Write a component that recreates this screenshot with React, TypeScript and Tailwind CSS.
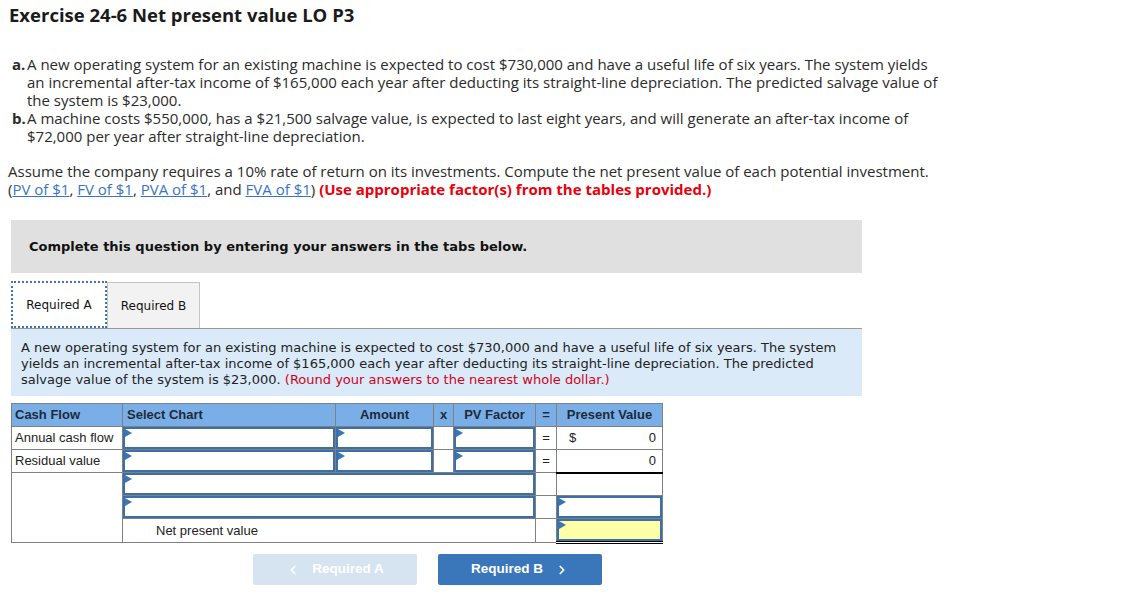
import React from "react";
import { ChevronLeft, ChevronRight } from "lucide-react";

const proxima = { fontFamily: "'Open Sans', Lato, sans-serif" };

function Flag() {
  return (
    <span className="absolute left-0 top-0 w-0 h-0 border-t-[4px] border-b-[4px] border-l-[7px] border-t-transparent border-b-transparent border-l-[#3a75b9]" />
  );
}

function InputCell({ yellow = false }: { yellow?: boolean }) {
  return (
    <div
      className={`relative h-[22px] border-2 border-[#3b6fa8] ${
        yellow ? "bg-[#ffffa8]" : "bg-white"
      }`}
    >
      <Flag />
    </div>
  );
}

export default function App() {
  const td = "border border-[#808080] p-0 align-middle";
  return (
    <div className="bg-white min-h-screen text-[#222]" style={proxima}>
      <div className="pl-[9px] pt-[4px]">
        <h1 className="text-[18.5px] font-bold text-[#1a1a1a] leading-[22px]">
          Exercise 24-6 Net present value LO P3
        </h1>
      </div>

      <div className="pl-[12px] pt-[29px] w-[1000px] text-[15px] leading-[18px] text-[#2b2b2b] whitespace-nowrap">
        <div className="flex">
          <span className="font-bold w-[15px] shrink-0">a.</span>
          <p>
            A new operating system for an existing machine is expected to cost
            $730,000 and have a useful life of six years. The system yields
            <br />
            an incremental after-tax income of $165,000 each year after
            deducting its straight-line depreciation. The predicted salvage
            value of
            <br />
            the system is $23,000.
          </p>
        </div>
        <div className="flex">
          <span className="font-bold w-[15px] shrink-0">b.</span>
          <p>
            A machine costs $550,000, has a $21,500 salvage value, is expected to
            last eight years, and will generate an after-tax income of
            <br />
            $72,000 per year after straight-line depreciation.
          </p>
        </div>
      </div>

      <p className="pl-[8px] pt-[17px] w-[1000px] text-[15px] leading-[18px] text-[#2b2b2b] whitespace-nowrap">
        Assume the company requires a 10% rate of return on its investments.
        Compute the net present value of each potential investment.
        <br />
        (<a className="text-[#3a74c4] underline">PV of $1</a>,{" "}
        <a className="text-[#3a74c4] underline">FV of $1</a>,{" "}
        <a className="text-[#3a74c4] underline">PVA of $1</a>, and{" "}
        <a className="text-[#3a74c4] underline">FVA of $1</a>){" "}
        <span className="font-bold text-[#e8000b]">
          (Use appropriate factor(s) from the tables provided.)
        </span>
      </p>

      <div
        className="ml-[11px] mt-[22px] w-[851px]"
        style={{ fontFamily: "'DejaVu Sans', Verdana, sans-serif" }}
      >
        <div className="h-[53px] bg-[#e0e0e0] flex items-center pl-[18px] text-[13px] font-bold text-[#111]">
          Complete this question by entering your answers in the tabs below.
        </div>

        <div className="mt-[8px] flex items-end border-b border-[#999]">
          <div className="h-[47px] w-[96px] border-2 border-dotted border-[#3a75b9] bg-white flex items-center justify-center text-[12px] text-[#111]">
            Required A
          </div>
          <div className="h-[46px] w-[93px] border border-b-0 border-[#c4c4c4] bg-[#f2f2f2] flex items-center justify-center text-[12px] text-[#111]">
            Required B
          </div>
        </div>

        <div className="bg-[#daeaf8] h-[67px] px-[10px] pt-[11px] text-[13px] leading-[16px] text-[#222]">
          A new operating system for an existing machine is expected to cost
          $730,000 and have a useful life of six years. The system yields an
          incremental after-tax income of $165,000 each year after deducting its
          straight-line depreciation. The predicted salvage value of the system
          is $23,000.{" "}
          <span className="text-[#d0021b]">
            (Round your answers to the nearest whole dollar.)
          </span>
        </div>
      </div>

      <table
        className="ml-[11px] mt-[7px] border-collapse table-fixed text-[13px] text-[#222]"
        style={{ fontFamily: "'Liberation Sans', Arial, sans-serif", width: 651 }}
      >
        <colgroup>
          <col style={{ width: 111 }} />
          <col style={{ width: 213 }} />
          <col style={{ width: 98 }} />
          <col style={{ width: 20 }} />
          <col style={{ width: 82 }} />
          <col style={{ width: 21 }} />
          <col style={{ width: 106 }} />
        </colgroup>
        <thead>
          <tr className="h-[23px] bg-[#7aaee6] text-[#1e2a3a]">
            <th className={`${td} text-left pl-[3px] font-bold`}>Cash Flow</th>
            <th className={`${td} text-left pl-[4px] font-bold`}>Select Chart</th>
            <th className={`${td} text-center font-bold`}>Amount</th>
            <th className={`${td} text-center font-bold`}>x</th>
            <th className={`${td} text-center font-bold`}>PV Factor</th>
            <th className={`${td} text-center font-bold`}>=</th>
            <th className={`${td} text-center font-bold`}>Present Value</th>
          </tr>
        </thead>
        <tbody>
          <tr className="h-[23px]">
            <td className={`${td} pl-[3px]`}>Annual cash flow</td>
            <td className={td}><InputCell /></td>
            <td className={td}><InputCell /></td>
            <td className={td}></td>
            <td className={td}><InputCell /></td>
            <td className={`${td} text-center`}>=</td>
            <td className={`${td} px-[6px]`}>
              <div className="flex justify-between pl-[6px]">
                <span>$</span>
                <span>0</span>
              </div>
            </td>
          </tr>
          <tr className="h-[23px]">
            <td className={`${td} pl-[3px]`}>Residual value</td>
            <td className={td}><InputCell /></td>
            <td className={td}><InputCell /></td>
            <td className={td}></td>
            <td className={td}><InputCell /></td>
            <td className={`${td} text-center`}>=</td>
            <td className={`${td} px-[6px] text-right border-b-2 border-b-black`}>0</td>
          </tr>
          <tr className="h-[23px]">
            <td className={td} rowSpan={3}></td>
            <td className={td} colSpan={4}><InputCell /></td>
            <td className={td}></td>
            <td className={td}></td>
          </tr>
          <tr className="h-[23px]">
            <td className={td} colSpan={4}><InputCell /></td>
            <td className={td}></td>
            <td className={td}><InputCell /></td>
          </tr>
          <tr className="h-[23px]">
            <td className={`${td} pl-[33px]`} colSpan={4}>Net present value</td>
            <td className={td}></td>
            <td className={`${td} border-b-[3px] border-b-black border-double`}>
              <InputCell yellow />
            </td>
          </tr>
        </tbody>
      </table>

      <div
        className="ml-[253px] mt-[10px] flex gap-[21px] text-[13.5px] font-bold text-white"
        style={{ fontFamily: "'Liberation Sans', Arial, sans-serif" }}
      >
        <button className="w-[164px] h-[31px] rounded-[2px] bg-[#d6e3f1] flex items-center justify-center gap-[12px]">
          <ChevronLeft size={14} strokeWidth={3} />
          <span>Required A</span>
        </button>
        <button className="w-[164px] h-[31px] rounded-[2px] bg-[#3a76ba] flex items-center justify-center gap-[12px]">
          <span>Required B</span>
          <ChevronRight size={14} strokeWidth={3} />
        </button>
      </div>
    </div>
  );
}
